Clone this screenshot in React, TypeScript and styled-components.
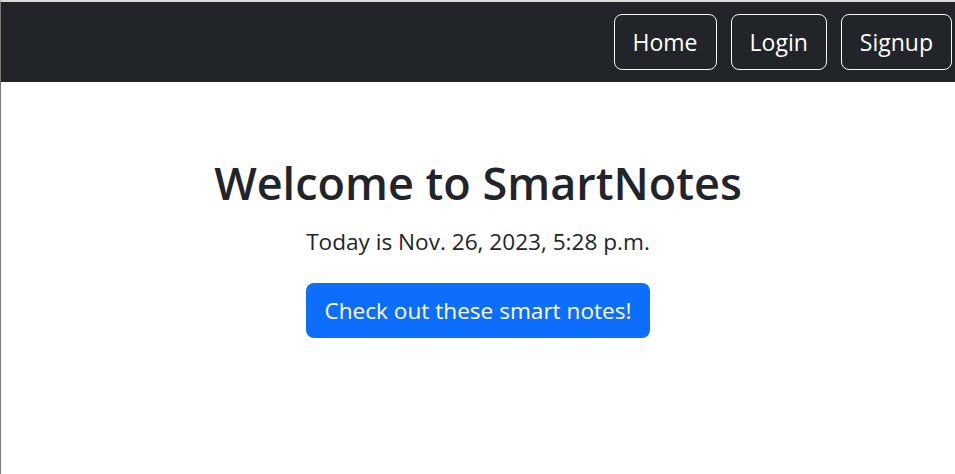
import React from "react";
import styled, { createGlobalStyle } from "styled-components";

const Global = createGlobalStyle`
  html, body { margin: 0; padding: 0; background: #ffffff; }
  body {
    font-family: "Open Sans", "Noto Sans", sans-serif;
    color: #212529;
    -webkit-font-smoothing: antialiased;
  }
`;

const Frame = styled.div`
  min-height: 474px;
  box-sizing: border-box;
  border-top: 2px solid #d9d9d9;
  border-left: 1px solid #7a7a7a;
  display: flex;
  flex-direction: column;
`;

const NavBar = styled.nav`
  background: #212529;
  height: 80px;
  box-sizing: border-box;
  display: flex;
  align-items: center;
  justify-content: flex-end;
  gap: 14px;
  padding: 0 3px 0 0;
`;

const NavButton = styled.a`
  display: inline-flex;
  align-items: center;
  justify-content: center;
  height: 56px;
  box-sizing: border-box;
  padding: 0 18px;
  border: 1px solid #f8f9fa;
  border-radius: 8px;
  color: #ffffff;
  font-size: 23px;
  text-decoration: none;
  cursor: pointer;
`;

const Main = styled.main`
  display: flex;
  flex-direction: column;
  align-items: center;
  padding-top: 72px;
`;

const Title = styled.h1`
  margin: 0;
  font-size: 45px;
  font-weight: 600;
  line-height: 57px;
  color: #212529;
`;

const Lead = styled.p`
  margin: 14px 0 0;
  font-size: 22.6px;
  line-height: 34px;
  color: #212529;
`;

const PrimaryButton = styled.a`
  display: inline-flex;
  align-items: center;
  justify-content: center;
  margin-top: 24px;
  height: 55px;
  box-sizing: border-box;
  padding: 0 19px 1px;
  border-radius: 8px;
  background: #0d6efd;
  color: #ffffff;
  font-size: 22.6px;
  text-decoration: none;
  cursor: pointer;
`;

export default function App() {
  return (
    <>
      <Global />
      <Frame>
        <NavBar>
          <NavButton>Home</NavButton>
          <NavButton>Login</NavButton>
          <NavButton>Signup</NavButton>
        </NavBar>
        <Main>
          <Title>Welcome to SmartNotes</Title>
          <Lead>Today is Nov. 26, 2023, 5:28 p.m.</Lead>
          <PrimaryButton>Check out these smart notes!</PrimaryButton>
        </Main>
      </Frame>
    </>
  );
}
